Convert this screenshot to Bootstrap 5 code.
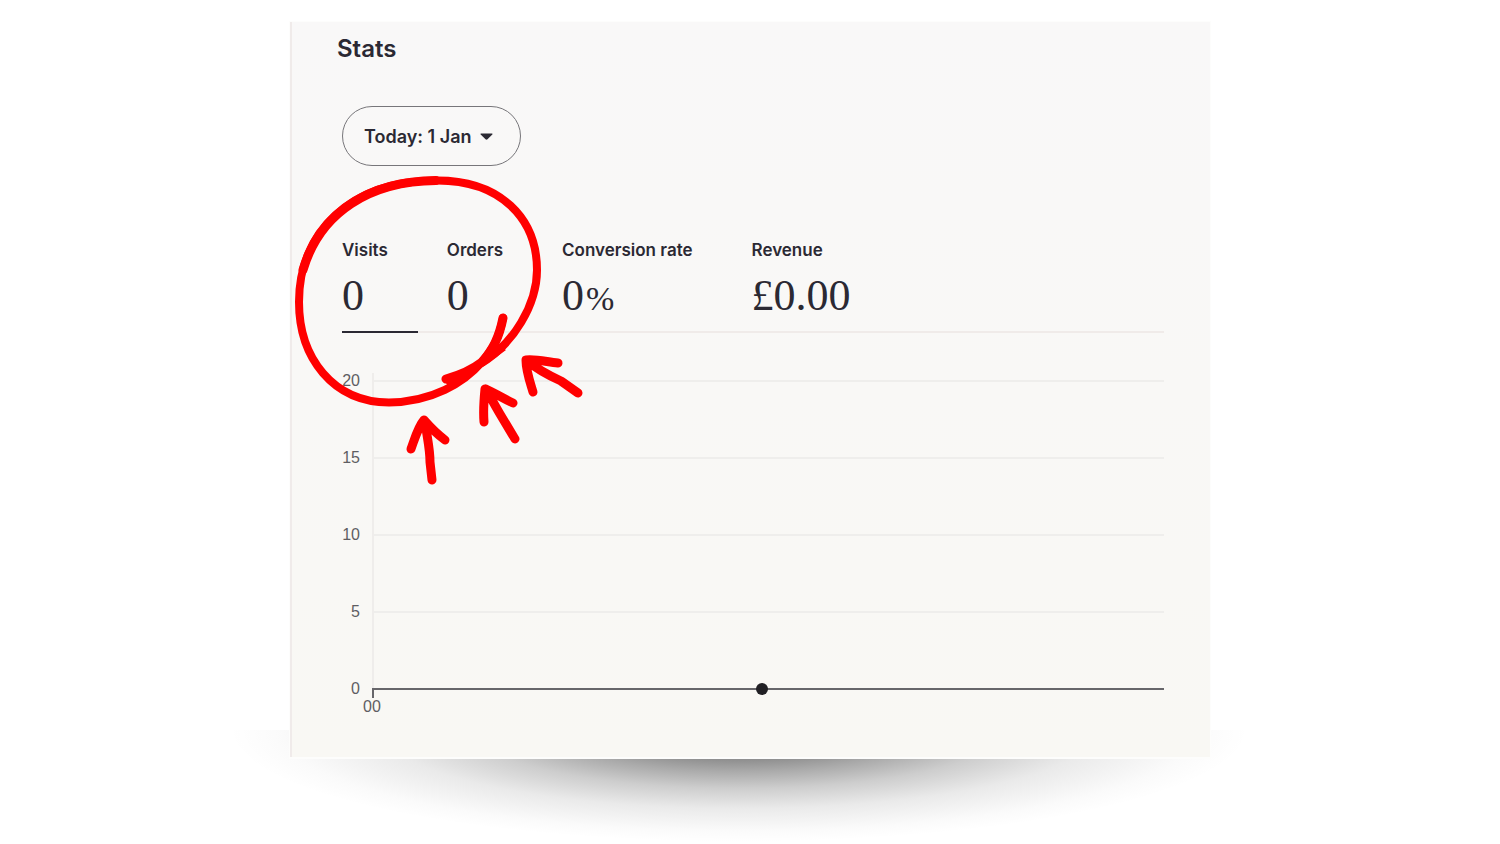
<!DOCTYPE html>
<html lang="en">
<head>
<meta charset="utf-8">
<meta name="viewport" content="width=device-width, initial-scale=1">
<title>Stats</title>
<link href="https://cdn.jsdelivr.net/npm/bootstrap@5.3.0/dist/css/bootstrap.min.css" rel="stylesheet">
<style>
  body { background: #fff; color: #2b2933; font-family: Inter, "Liberation Sans", sans-serif; }
  .stats-wrap { max-width: 922px; padding-top: 21px; }
  .stats-panel { background: linear-gradient(#f9f8f8, #f9f8f4); border: 1px solid #fdfdfc; border-width: 1px 1px 2px; padding: 14px 46px 42px 52px; z-index: 1; }
  .stats-panel::before { content: ""; position: absolute; left: 0; top: 0; bottom: 0; border-left: 2px solid #f0ebea; }
  .stats-title { font-size: 24px; line-height: 26px; font-weight: 600; margin: 0 0 44px -5px; }
  .range-btn { --bs-btn-color: #2b2933; --bs-btn-border-color: #77767a; --bs-btn-hover-color: #2b2933; --bs-btn-hover-border-color: #2b2933;
    height: 60px; padding: 0 27px 0 21px; font-size: 18px; font-weight: 600; }
  .metric-tabs { margin-top: 72px; gap: 29px; border-bottom: 2px solid #f0ebe9; }
  .metric-tab { padding: 0 30px 7px 0; margin-bottom: -2px; color: #2b2933; background: none; border: 0; border-bottom: 2px solid transparent; text-align: left; }
  .metric-tab.active { border-bottom-color: #2b2933; }
  .metric-label { font-size: 17px; line-height: 24px; font-weight: 600; }
  .metric-value { margin-top: 6px; font-family: "Liberation Serif", serif; font-size: 44px; line-height: 56px; }
  .metric-unit { font-size: 34px; line-height: 1; margin-left: 2px; }
  .chart { color: #5f5e63; font-family: "Liberation Sans", sans-serif; font-size: 16px; line-height: 16px; }
  .chart-plot { margin-top: 9px; }
  .chart-row { height: 77px; gap: 12px; }
  .chart-key { width: 18px; }
  .grid-rule { height: 2px; background: #efeeec; }
  .grid-base { background: #67666a; }
  .chart-axis { left: 30px; top: 31px; bottom: 38px; border-left: 2px solid #efedeb; }
  .chart-tick { left: 30px; bottom: 29px; height: 10px; border-left: 2px solid #67666a; }
  .chart-dot { width: 12px; height: 12px; background: #212024; left: 48.5%; top: -5px; }
  .hour-label { margin: -28px 0 0 21px; }
  .ground-shadow { height: 112px; margin: -29px -90px 0;
    background: radial-gradient(ellipse 510px 112px at 49% 0, rgba(20,24,20,.6) 0, rgba(20,20,20,.47) 27%, rgba(20,20,20,.36) 37%, rgba(20,20,20,.21) 52%, rgba(20,20,20,.09) 70%, rgba(20,20,20,.02) 90%, rgba(20,20,20,0) 100%); }
  .callout { left: 0; top: 0; pointer-events: none; }
</style>
</head>
<body class="overflow-x-hidden">
<main class="stats-wrap mx-auto">
  <section class="stats-panel position-relative">
    <h1 class="stats-title">Stats</h1>
    <button type="button" class="btn btn-outline-dark range-btn rounded-pill d-inline-flex align-items-center">
      Today: 1 Jan
      <svg class="ms-2" width="13" height="7" viewBox="0 0 13 7" aria-hidden="true"><path d="M1 .5h11q1 .2.3 1L7.5 6.3q-1 .8-2 0L.7 1.500Q0 .7 1 .5z" fill="#2b2933"/></svg>
    </button>

    <div class="metric-tabs d-flex" role="tablist">
      <button type="button" role="tab" aria-selected="true" class="metric-tab active">
        <span class="metric-label d-block">Visits</span><span class="metric-value d-block">0</span>
      </button>
      <button type="button" role="tab" aria-selected="false" class="metric-tab">
        <span class="metric-label d-block">Orders</span><span class="metric-value d-block">0</span>
      </button>
      <button type="button" role="tab" aria-selected="false" class="metric-tab">
        <span class="metric-label d-block">Conversion rate</span><span class="metric-value d-block">0<span class="metric-unit">%</span></span>
      </button>
      <button type="button" role="tab" aria-selected="false" class="metric-tab">
        <span class="metric-label d-block">Revenue</span><span class="metric-value d-block">£0.00</span>
      </button>
    </div>

    <div class="chart chart-plot position-relative">
      <div class="chart-axis position-absolute"></div>
      <div class="chart-row d-flex align-items-center"><span class="chart-key text-end">20</span><div class="grid-rule flex-grow-1"></div></div>
      <div class="chart-row d-flex align-items-center"><span class="chart-key text-end">15</span><div class="grid-rule flex-grow-1"></div></div>
      <div class="chart-row d-flex align-items-center"><span class="chart-key text-end">10</span><div class="grid-rule flex-grow-1"></div></div>
      <div class="chart-row d-flex align-items-center"><span class="chart-key text-end">5</span><div class="grid-rule flex-grow-1"></div></div>
      <div class="chart-row d-flex align-items-center"><span class="chart-key text-end">0</span><div class="grid-rule grid-base flex-grow-1 position-relative"><span class="chart-dot position-absolute rounded-circle"></span></div></div>
      <div class="chart-tick position-absolute"></div>
    </div>
    <div class="chart hour-label position-relative">00</div>

    <!-- Hand-drawn ring and arrows around the first two metrics -->
    <svg class="callout position-absolute" width="310" height="480" viewBox="290 22 310 480" fill="none" stroke="#f00" stroke-width="9" stroke-linecap="round" stroke-linejoin="round" aria-hidden="true">
      <path stroke-width="8" d="M503 318C499 338 493 349 482 362C464 383 432 402 389 402.500C333 402 299 358 299 302C299 232 350 181 436 180.500C500 180 537 218 537 270C537 304 514 344 480 364"/>
      <path stroke-width="9" d="M503 318C499 338 493 349 482 362C473 369 460 375 446 379M303 270C320 212 370 181 436 180.500"/>
      <path fill="#f00" stroke="none" d="M446 383L482 360L462 383L449 388zM482 362L497 345L506 350L484 366z"/>
      <path d="M411 449C415 438 418 427 424 420C431 428 437 434 445 440M425 421C427 438 430 448 430 462L432 480"/>
      <path d="M484 422C483 410 484 399 485 389C495 393 502 398 513 403M486 389C491 398 494 404 500 414L515 439"/>
      <path d="M533 392C530 382 526 371 526 360C537 359 547 362 558 363M526 360C538 370 550 376 561 381L578 393"/>
    </svg>
  </section>
  <div class="ground-shadow"></div>
</main>
<script src="https://cdn.jsdelivr.net/npm/bootstrap@5.3.0/dist/js/bootstrap.bundle.min.js"></script>
</body>
</html>
